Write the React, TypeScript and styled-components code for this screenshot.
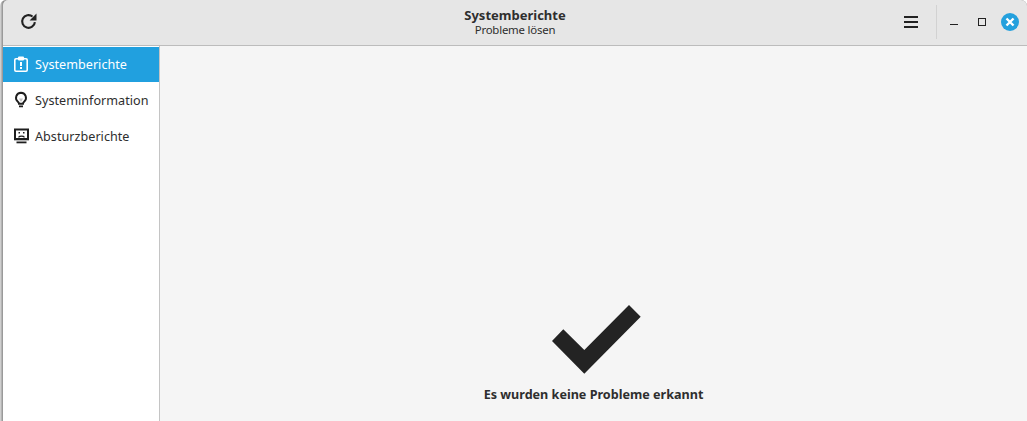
import React from "react";
import styled, { createGlobalStyle } from "styled-components";

const GlobalStyle = createGlobalStyle`
  html, body {
    margin: 0;
    padding: 0;
    background: #ffffff;
  }
  body {
    font-family: "Noto Sans", "Open Sans", sans-serif;
    font-size: 13px;
    color: #2e2e2e;
  }
`;

const navItems = [
  { label: "Systemberichte", icon: "report", active: true },
  { label: "Systeminformation", icon: "bulb", active: false },
  { label: "Absturzberichte", icon: "crash", active: false },
];

const NavIcon = ({ name }: { name: string }) => {
  if (name === "report") {
    return (
      <svg width="18" height="18" viewBox="0 0 18 18">
        <rect x="2.800" y="3.800" width="12.400" height="12.400" rx="1.200" fill="none" stroke="currentColor" strokeWidth="1.600" />
        <rect x="6" y="1.500" width="6" height="4" rx="1" fill="currentColor" />
        <rect x="8" y="7" width="2" height="4" fill="currentColor" />
        <rect x="8" y="12" width="2" height="2" fill="currentColor" />
      </svg>
    );
  }
  if (name === "bulb") {
    return (
      <svg width="18" height="18" viewBox="0 0 18 18">
        <path d="M7 7.500h4l-1.500 3h-1z" fill="#c4c4c4" />
        <path
          d="M9 1.800a5 5 0 0 0-3.100 8.900c.7.600 1.100 1.100 1.100 2h4c0-.9.400-1.400 1.100-2A5 5 0 0 0 9 1.800z"
          fill="none"
          stroke="#1e1e1e"
          strokeWidth="1.900"
        />
        <path d="M7 15.300h4" stroke="#1e1e1e" strokeWidth="1.800" />
      </svg>
    );
  }
  return (
    <svg width="18" height="18" viewBox="0 0 18 18">
      <rect x="3" y="2.500" width="13" height="9.500" fill="none" stroke="#1e1e1e" strokeWidth="2" />
      <rect x="2" y="11.500" width="15" height="1.800" fill="#1e1e1e" />
      <rect x="6.500" y="5" width="1.500" height="1.500" fill="#1e1e1e" />
      <rect x="11" y="5" width="1.500" height="1.500" fill="#1e1e1e" />
      <path d="M6.500 10.300c1-1.500 5-1.500 6 0" fill="none" stroke="#1e1e1e" strokeWidth="1.200" />
      <rect x="4.500" y="14.500" width="10" height="1.800" fill="#1e1e1e" />
    </svg>
  );
};

const App = () => {
  return (
    <>
      <GlobalStyle />
      <Window>
        <HeaderBar>
          <IconButton aria-label="Aktualisieren">
            <svg width="17" height="17" viewBox="0 0 16 16">
              <path d="M14 8.500A6 6 0 1 1 11.800 3.300" fill="none" stroke="#222222" strokeWidth="2" />
              <path d="M15.500 0.500v6.500h-6.500z" fill="#222222" />
            </svg>
          </IconButton>
          <TitleBlock>
            <Title>Systemberichte</Title>
            <Subtitle>Probleme lösen</Subtitle>
          </TitleBlock>
          <HeaderControls>
            <MenuButton aria-label="Menü">
              <MenuLine />
              <MenuLine />
              <MenuLine />
            </MenuButton>
            <Divider />
            <Minimize />
            <Maximize />
            <CloseButton>
              <svg width="10" height="10" viewBox="0 0 10 10">
                <path d="M1.500 1.500l7 7M8.500 1.500l-7 7" stroke="#ffffff" strokeWidth="2.400" />
              </svg>
            </CloseButton>
          </HeaderControls>
        </HeaderBar>
        <Body>
          <Sidebar>
            {navItems.map((item) => (
              <NavRow key={item.label} $active={item.active}>
                <NavIcon name={item.icon} />
                <NavLabel>{item.label}</NavLabel>
              </NavRow>
            ))}
          </Sidebar>
          <Content>
            <StatusBlock>
              <CheckMark width="89" height="69" viewBox="0 0 89 69">
                <path d="M0 36L11.300 24.300L32.300 45L77 0L88.700 11.700L32.300 68.700z" fill="#232323" />
              </CheckMark>
              <StatusText>Es wurden keine Probleme erkannt</StatusText>
            </StatusBlock>
          </Content>
        </Body>
      </Window>
    </>
  );
};

export default App;

const Window = styled.div`
  width: 1027px;
  height: 421px;
  padding-left: 3px;
  box-sizing: border-box;
  display: flex;
  flex-direction: column;
  overflow: hidden;
  border-radius: 6px 6px 0 0;
  background: linear-gradient(90deg, #dcdcdc 0, #a8a8a8 2px, #8c8c8c 3px);
`;

const HeaderBar = styled.header`
  height: 46px;
  flex: none;
  box-sizing: border-box;
  display: flex;
  align-items: center;
  justify-content: space-between;
  position: relative;
  padding: 0 8px 2px 17px;
  background: #e6e6e6;
  border-bottom: 1px solid #bcbcbc;
  border-radius: 5px 0 0 0;
`;

const IconButton = styled.button`
  width: 17px;
  height: 17px;
  padding: 0;
  display: flex;
  align-items: center;
  justify-content: center;
  border: none;
  background: none;
`;

const TitleBlock = styled.div`
  position: absolute;
  left: 0;
  right: 0;
  top: 8px;
  display: flex;
  flex-direction: column;
  align-items: center;
  color: #2e2e2e;
`;

const Title = styled.div`
  font-size: 13px;
  font-weight: 700;
  line-height: 15px;
`;

const Subtitle = styled.div`
  font-size: 11.4px;
  letter-spacing: -0.2px;
  line-height: 14px;
`;

const HeaderControls = styled.div`
  display: flex;
  align-items: center;
  position: relative;
`;

const MenuButton = styled.div`
  width: 14px;
  height: 12px;
  display: flex;
  flex-direction: column;
  justify-content: space-between;
  margin-right: 18px;
`;

const MenuLine = styled.div`
  height: 2px;
  background: #222222;
`;

const Divider = styled.div`
  width: 1px;
  height: 34px;
  background: #d2d2d2;
  margin-right: 13px;
`;

const Minimize = styled.div`
  width: 8px;
  height: 1px;
  margin-top: 5px;
  margin-right: 20px;
  background: #222222;
`;

const Maximize = styled.div`
  width: 6px;
  height: 6px;
  border: 1px solid #222222;
  margin-right: 15px;
`;

const CloseButton = styled.div`
  width: 18px;
  height: 18px;
  border-radius: 50%;
  background: #24a0dd;
  display: flex;
  align-items: center;
  justify-content: center;
`;

const Body = styled.div`
  flex: 1;
  display: flex;
  min-height: 0;
`;

const Sidebar = styled.nav`
  width: 157px;
  flex: none;
  box-sizing: border-box;
  padding-top: 1px;
  background: #ffffff;
  border-right: 1px solid #c4c4c4;
`;

const NavRow = styled.div<{ $active?: boolean }>`
  height: 35px;
  box-sizing: border-box;
  margin-bottom: 1px;
  padding: 0 0 1px 9px;
  display: flex;
  align-items: center;
  gap: 5px;
  color: ${(p) => (p.$active ? "#ffffff" : "#2e2e2e")};
  background: ${(p) => (p.$active ? "#21a0df" : "transparent")};
`;

const NavLabel = styled.span`
  font-size: 12.6px;
  letter-spacing: 0.03px;
  line-height: 18px;
  margin-top: 2px;
`;

const Content = styled.main`
  flex: 1;
  display: flex;
  flex-direction: column;
  align-items: center;
  justify-content: flex-end;
  background: #f5f5f5;
`;

const StatusBlock = styled.div`
  display: flex;
  flex-direction: column;
  align-items: center;
  margin-bottom: 17px;
`;

const CheckMark = styled.svg`
  margin-left: 6px;
`;

const StatusText = styled.div`
  margin-top: 12px;
  font-size: 12.6px;
  font-weight: 700;
  line-height: 18px;
  color: #2e2e2e;
`;
